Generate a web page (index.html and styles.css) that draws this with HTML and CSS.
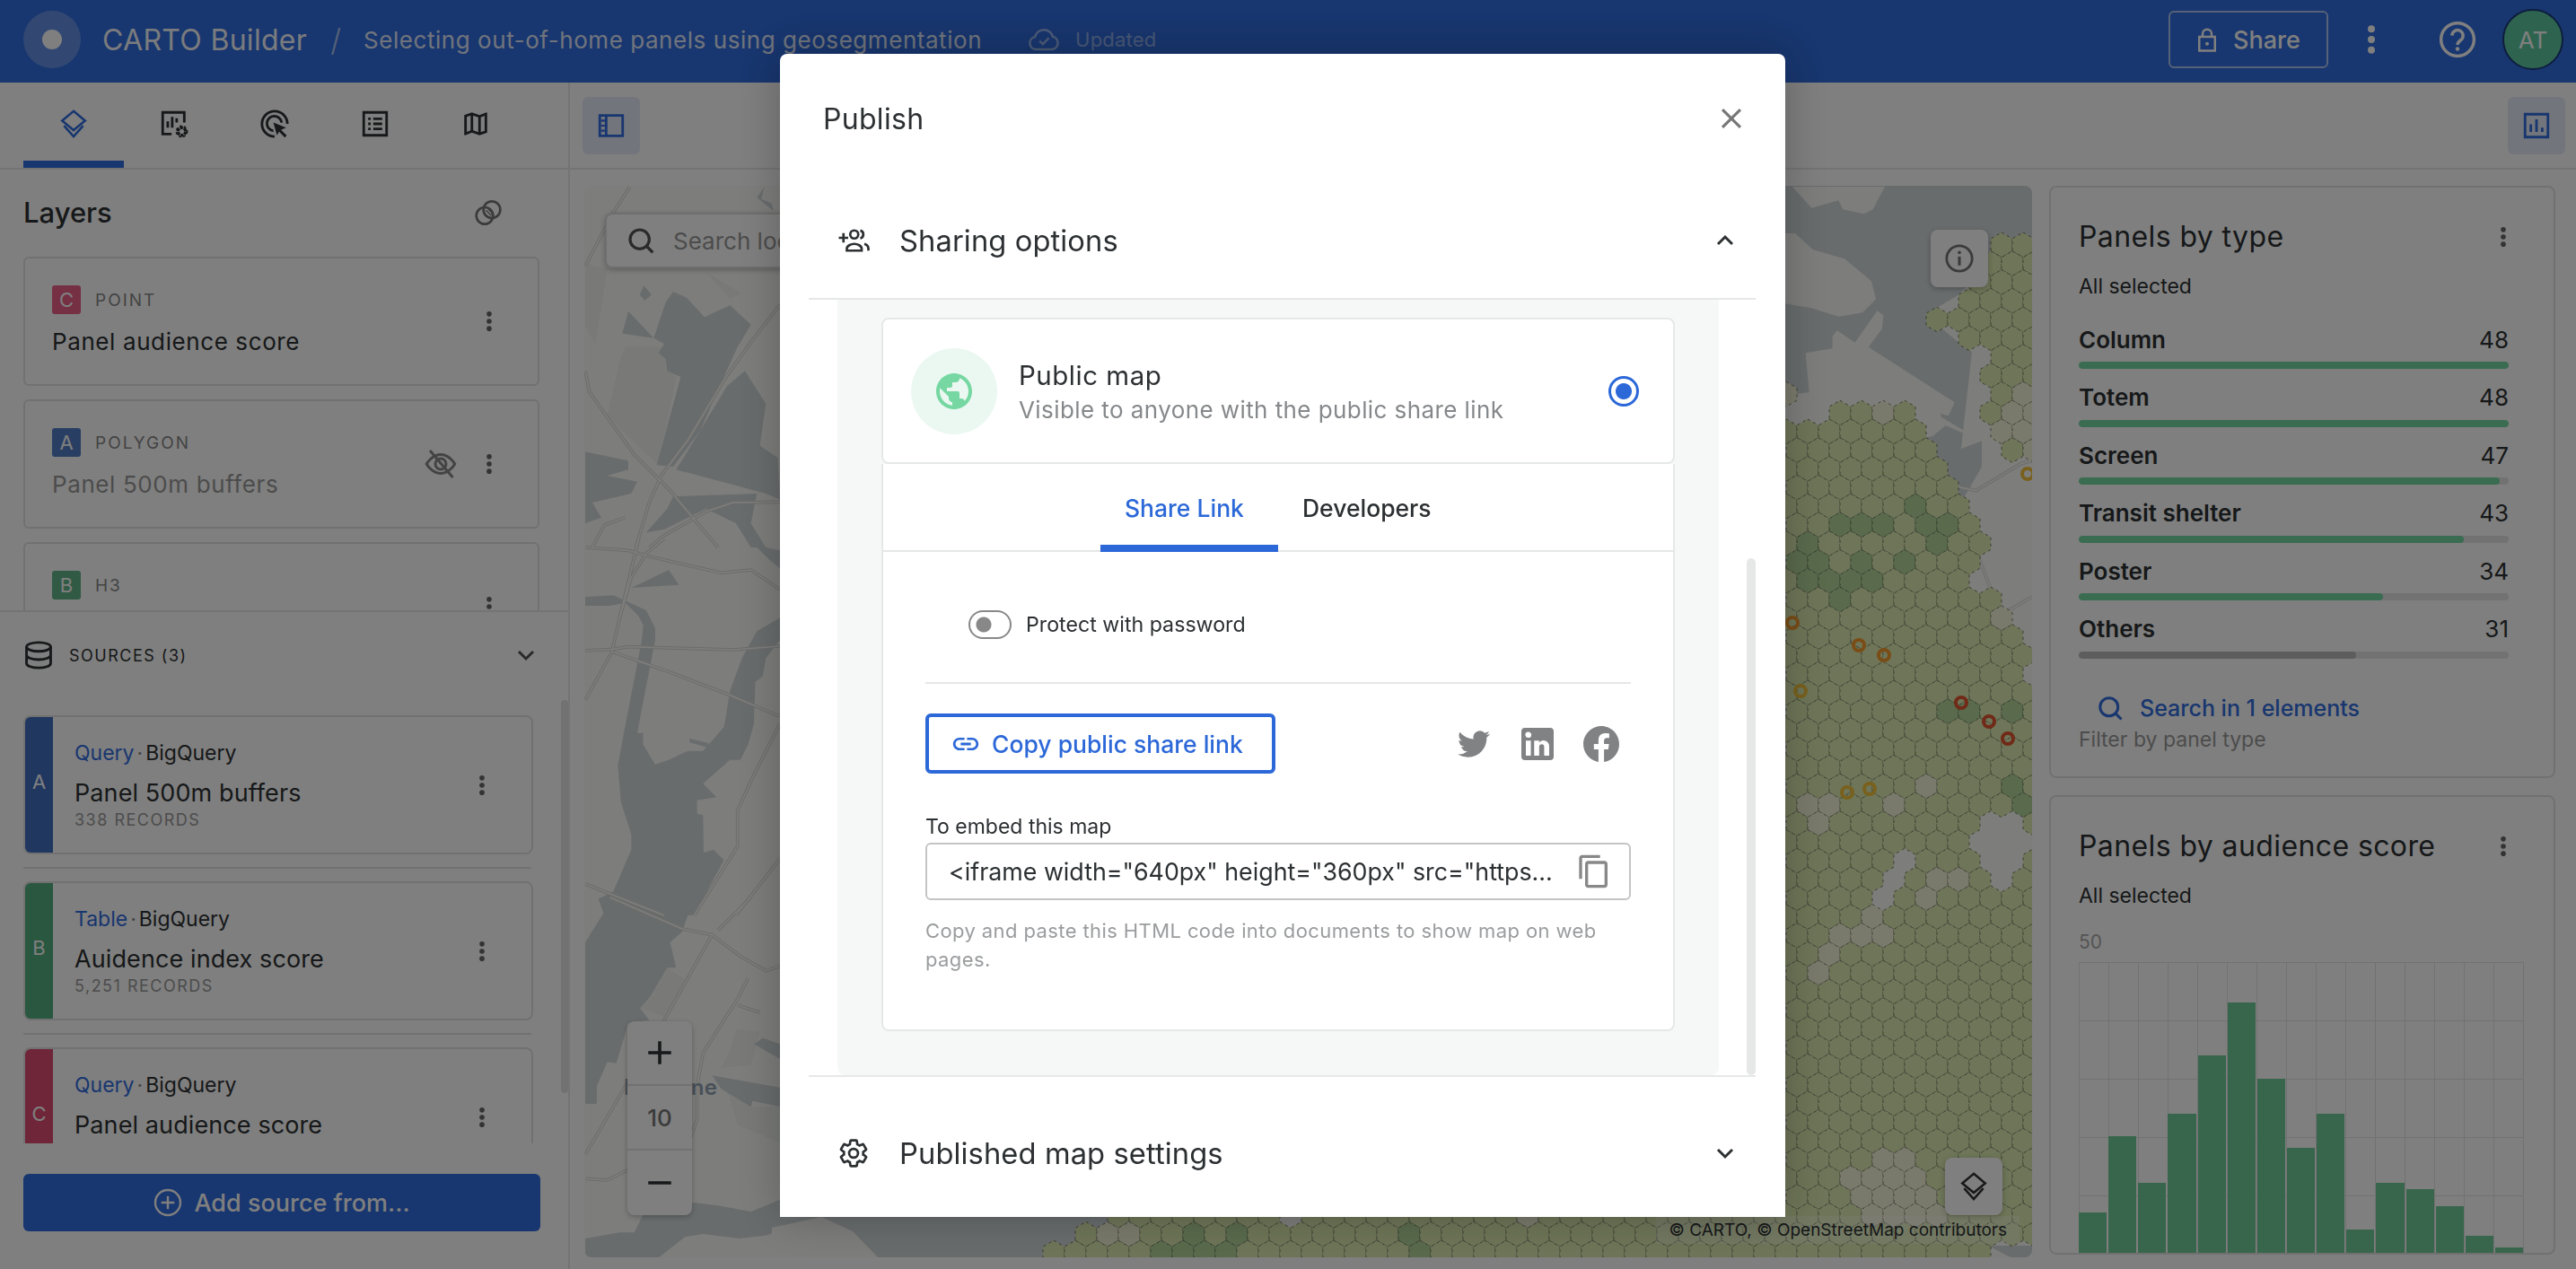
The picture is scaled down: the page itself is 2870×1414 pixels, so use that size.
FILE: index.html
```html
<!DOCTYPE html>
<html lang="en">
<head>
    <meta charset="UTF-8">
    <title>CARTO Builder - Publish</title>
    <link rel="stylesheet" href="styles.css">
</head>
<body>

    <!-- Shared icons -->
    <svg class="sprite" width="0" height="0">
        <symbol id="i-dots" viewBox="0 0 24 24"><circle cx="12" cy="5" r="2.4"/><circle cx="12" cy="12" r="2.4"/><circle cx="12" cy="19" r="2.4"/></symbol>
        <symbol id="i-layers" viewBox="0 0 24 24"><path d="M12 2 21 9.500 12 17 3 9.500Z M4.500 13.500 12 22 19.500 13.500" fill="none" stroke="currentColor" stroke-width="1.800"/></symbol>
        <symbol id="i-search" viewBox="0 0 24 24"><circle cx="11" cy="11" r="8" fill="none" stroke="currentColor" stroke-width="2.400"/><path d="m16.500 16.500 5.500 5.500" stroke="currentColor" stroke-width="2.400"/></symbol>
        <symbol id="i-chevron" viewBox="0 0 24 24"><path d="M6 9l6 6 6-6" fill="none" stroke="currentColor" stroke-width="2.200"/></symbol>
    </svg>

    <div class="app">
        <!-- Top bar -->
        <header class="topbar">
            <div class="logo"><span></span></div>
            <div class="product">CARTO Builder</div>
            <div class="slash">/</div>
            <div class="map-title">Selecting out-of-home panels using geosegmentation</div>
            <svg class="cloud" viewBox="0 0 24 24"><path d="M6.500 19a4.500 4.500 0 0 1-.8-8.900A6.500 6.500 0 0 1 18.300 10 4.600 4.600 0 0 1 18 19Z M9 13l2.300 2.300L15.500 11" fill="none" stroke="currentColor" stroke-width="1.600"/></svg>
            <div class="saved">Updated</div>
            <div class="topbar-right">
                <button class="share-btn">
                    <svg viewBox="0 0 24 24"><path d="M5 9.500h14V22H5Z M8 9.500V7a4 4 0 0 1 8 0v2.500" fill="none" stroke="currentColor" stroke-width="2"/><circle cx="12" cy="15.700" r="1.600" fill="currentColor"/></svg>
                    Share
                </button>
                <svg class="top-dots"><use href="#i-dots"/></svg>
                <svg class="help" viewBox="0 0 24 24"><circle cx="12" cy="12" r="10.500" fill="none" stroke="currentColor" stroke-width="2"/><path d="M8.500 9.500a3.500 3.500 0 1 1 5.500 2.900c-1.300.9-2 1.500-2 3" fill="none" stroke="currentColor" stroke-width="2"/><circle cx="12" cy="18" r="1.300" fill="currentColor"/></svg>
                <div class="avatar">AT</div>
            </div>
        </header>

        <div class="workspace">
            <!-- Left panel -->
            <aside class="left">
                <div class="tabs">
                    <div class="tab active"><svg><use href="#i-layers"/></svg></div>
                    <div class="tab">
                        <svg viewBox="0 0 24 24"><path d="M10 20H3V3h17v8" fill="none" stroke="currentColor" stroke-width="2"/><path d="M7 15V10M10.500 15V6.500M14 11V7.500" stroke="currentColor" stroke-width="2"/><circle cx="18" cy="18" r="3" fill="none" stroke="currentColor" stroke-width="2.400" stroke-dasharray="2.500 .6"/><circle cx="18" cy="18" r="4.300" fill="none" stroke="currentColor" stroke-width="1.200" stroke-dasharray="1.800 1.800"/></svg>
                    </div>
                    <div class="tab">
                        <svg viewBox="0 0 24 24"><path d="M12 22A10 10 0 1 1 22 12" fill="none" stroke="currentColor" stroke-width="2"/><path d="M11 17.500A5.800 5.800 0 1 1 17.500 11" fill="none" stroke="currentColor" stroke-width="2"/><path d="M11 11l10 4-4 1.700 4.500 4.500-1.500 1.500-4.500-4.500L13.800 21Z" fill="currentColor"/></svg>
                    </div>
                    <div class="tab">
                        <svg viewBox="0 0 24 24"><path d="M3 3h18v18H3Z" fill="none" stroke="currentColor" stroke-width="2"/><path d="M6.500 8h2M6.500 12h2M6.500 16h2M10.500 8h7M10.500 12h7M10.500 16h7" stroke="currentColor" stroke-width="2"/></svg>
                    </div>
                    <div class="tab">
                        <svg viewBox="0 0 24 24"><path fill="currentColor" d="M20.500 3l-.16.03L15 5.100 9 3 3.360 4.900c-.21.07-.36.25-.36.48V20.500c0 .28.22.5.5.5l.16-.03L9 18.900l6 2.100 5.640-1.900c.21-.07.36-.25.36-.48V3.500c0-.28-.22-.5-.5-.5zM10 5.470l4 1.400v11.660l-4-1.400V5.470zm-5 .99l3-1.010v11.700l-3 1.160V6.460zm14 11.080l-3 1.010V6.860l3-1.160v11.840z"/></svg>
                    </div>
                </div>

                <!-- Layers -->
                <section class="layers">
                    <div class="layers-head">
                        <h2>Layers</h2>
                        <svg viewBox="0 0 24 24"><circle cx="9" cy="14.500" r="7" fill="none" stroke="currentColor" stroke-width="2"/><circle cx="15" cy="9.500" r="7" fill="none" stroke="currentColor" stroke-width="2"/><path d="M10 10l4.500 4.500M12 9l3 3" stroke="currentColor" stroke-width="1"/></svg>
                    </div>
                    <div class="layer-card">
                        <div class="layer-text">
                            <div class="layer-type"><span class="chip chip-c">C</span>POINT</div>
                            <div class="layer-name">Panel audience score</div>
                        </div>
                        <svg class="dots"><use href="#i-dots"/></svg>
                    </div>
                    <div class="layer-card hidden-layer">
                        <div class="layer-text">
                            <div class="layer-type"><span class="chip chip-a">A</span>POLYGON</div>
                            <div class="layer-name">Panel 500m buffers</div>
                        </div>
                        <svg class="eye" viewBox="0 0 24 24"><path d="M1.500 12S5.500 5 12 5s10.500 7 10.500 7-4 7-10.500 7S1.500 12 1.500 12Z" fill="none" stroke="currentColor" stroke-width="2"/><circle cx="12" cy="12" r="4" fill="none" stroke="currentColor" stroke-width="2"/><path d="M4 2l17 20" stroke="currentColor" stroke-width="2"/></svg>
                        <svg class="dots"><use href="#i-dots"/></svg>
                    </div>
                    <div class="layer-card">
                        <div class="layer-text">
                            <div class="layer-type"><span class="chip chip-b">B</span>H3</div>
                            <div class="layer-name">&nbsp;</div>
                        </div>
                        <svg class="dots"><use href="#i-dots"/></svg>
                    </div>
                </section>

                <!-- Sources -->
                <section class="sources">
                    <div class="sources-head">
                        <svg viewBox="0 0 24 24"><ellipse cx="12" cy="5.500" rx="9.500" ry="3.500" fill="none" stroke="currentColor" stroke-width="2"/><path d="M2.500 5.500v13c0 2 4.300 3.500 9.500 3.500s9.500-1.500 9.500-3.500v-13M2.500 12c0 2 4.300 3.500 9.500 3.500s9.500-1.500 9.500-3.500" fill="none" stroke="currentColor" stroke-width="2"/></svg>
                        <span>SOURCES (3)</span>
                        <svg class="sources-chevron"><use href="#i-chevron"/></svg>
                    </div>
                    <div class="source-list">
                        <div class="source-card">
                            <div class="source-strip strip-a">A</div>
                            <div class="source-text">
                                <div class="source-kind"><span>Query</span><i>&middot;</i>BigQuery</div>
                                <div class="source-name">Panel 500m buffers</div>
                                <div class="source-count">338 RECORDS</div>
                            </div>
                            <svg class="dots"><use href="#i-dots"/></svg>
                        </div>
                        <div class="source-sep"></div>
                        <div class="source-card">
                            <div class="source-strip strip-b">B</div>
                            <div class="source-text">
                                <div class="source-kind"><span>Table</span><i>&middot;</i>BigQuery</div>
                                <div class="source-name">Auidence index score</div>
                                <div class="source-count">5,251 RECORDS</div>
                            </div>
                            <svg class="dots"><use href="#i-dots"/></svg>
                        </div>
                        <div class="source-sep"></div>
                        <div class="source-card">
                            <div class="source-strip strip-c">C</div>
                            <div class="source-text">
                                <div class="source-kind"><span>Query</span><i>&middot;</i>BigQuery</div>
                                <div class="source-name">Panel audience score</div>
                                <div class="source-count">&nbsp;</div>
                            </div>
                            <svg class="dots"><use href="#i-dots"/></svg>
                        </div>
                    </div>
                    <button class="add-source">
                        <svg viewBox="0 0 24 24"><circle cx="12" cy="12" r="10.500" fill="none" stroke="currentColor" stroke-width="1.800"/><path d="M12 6.500v11M6.500 12h11" stroke="currentColor" stroke-width="1.800"/></svg>
                        Add source from...
                    </button>
                    <div class="side-scroll"></div>
                </section>
            </aside>

            <!-- Map and widgets -->
            <div class="center">
                <div class="toolbar">
                    <div class="tool-btn">
                        <svg viewBox="0 0 24 24"><path d="M3 4h18v16H3Z M8 4v16" fill="none" stroke="currentColor" stroke-width="2"/><path d="M4 8h3M4 12h3M4 16h3" stroke="currentColor" stroke-width="1.500"/></svg>
                    </div>
                    <div class="caret"></div>
                    <div class="tool-sep"></div>
                    <div class="tool-btn tool-right">
                        <svg viewBox="0 0 24 24"><path d="M3 3h18v18H3Z" fill="none" stroke="currentColor" stroke-width="2"/><path d="M7.500 17v-6M12 17V7M16.500 17v-3.500" stroke="currentColor" stroke-width="2"/></svg>
                    </div>
                </div>

                <div class="content">
                    <div class="map">
                        <svg class="map-art" viewBox="651 207 1613 1194" preserveAspectRatio="none">
                            <defs>
                                <g id="roads-left" fill="none">
                                    <g transform="translate(640 190) scale(.3333)">
                                        <path d="M185 55 130 140 36 320"/>
                                        <path d="M687 450 600 560 500 700 380 900 290 1020 250 1110 205 1260"/>
                                        <path d="M36 670 50 740 85 790 200 950 320 1070 420 1190 480 1260"/>
                                        <path d="M687 1108 530 1110 440 1140 300 1220 250 1260"/>
                                        <path d="M170 1160 100 1185 60 1260"/>
                                    </g>
                                    <g transform="translate(640 600) scale(.3333)">
                                        <path d="M36 30 180 40 250 60 490 115 590 105 687 170"/>
                                        <path d="M300 0 240 50 190 130 150 270 125 380 36 540"/>
                                        <path d="M215 0 150 270"/>
                                        <path d="M36 375 130 370 180 362 530 372 687 360"/>
                                        <path d="M130 380 300 440 510 520 687 595"/>
                                        <path d="M687 620 600 790 545 910 545 1030 400 1260"/>
                                        <path d="M687 1070 540 1260"/>
                                        <path d="M36 1155 300 1260"/>
                                    </g>
                                    <g transform="translate(640 1000) scale(.3333)">
                                        <path d="M120 0 360 105 460 125 560 200 640 245 687 230"/>
                                        <path d="M460 125 300 410 36 860"/>
                                        <path d="M590 0 480 110"/>
                                        <path d="M580 270 545 340 430 520 410 630 410 740 390 800"/>
                                        <path d="M545 360 620 385"/>
                                        <path d="M36 940 110 945 180 910"/>
                                    </g>
                                    <g transform="translate(1985 200) scale(.3333)">
                                        <path d="M535 1000 600 1030 650 1040 800 950 837 940"/>
                                        <path d="M650 1240 710 1400 750 1450"/>
                                        <path d="M760 1440 837 1395"/>
                                    </g>
                                </g>
                            </defs>

                            <rect class="land" x="651" y="207" width="1613" height="1194"/>

                            <!-- West side water and parks -->
                            <g transform="translate(640 190) scale(.3333)">
                                <g class="park">
                                    <polygon points="36,310 110,330 70,580 36,520"/>
                                    <polygon points="170,590 300,590 340,690 280,985 110,820 150,640"/>
                                    <polygon points="440,340 560,410 520,430"/>
                                </g>
                                <g class="water">
                                    <polygon points="330,405 375,425 435,490 520,450 590,515 545,590 495,700 420,870 330,990 275,985 355,690 310,670 305,630 280,610 300,580 265,560 305,440"/>
                                    <polygon points="510,720 570,670 640,780 620,920 680,960 687,1100 640,1080 340,1000 420,870"/>
                                    <polygon points="36,940 180,970 180,1000 110,1020 210,1040 190,1080 60,1110 90,1160 36,1180"/>
                                    <polygon points="180,470 265,560 160,545"/>
                                    <polygon points="232,385 258,415 235,435 218,415"/>
                                    <polygon points="330,1090 610,1080 590,1180 640,1260 590,1260 540,1180 440,1130 300,1200 240,1210 310,1130"/>
                                    <polygon points="635,55 610,90 665,135 660,110 625,95"/>
                                </g>
                            </g>
                            <g transform="translate(640 600) scale(.3333)">
                                <g class="water">
                                    <polygon points="36,195 130,190 240,240 270,300 270,340 210,650 230,650 230,690 270,755 315,740 380,710 430,710 500,630 520,510 560,400 610,310 687,265 687,340 640,400 630,460 605,480 600,620 580,690 555,740 520,740 430,820 475,865 410,875 410,920 430,925 432,1050 465,1040 500,1075 400,1260 100,1260 80,1205 130,1180 190,1040 190,990 155,880 145,760 165,650 225,340 230,290 215,260 170,215 120,225 36,225"/>
                                    <polygon points="600,0 640,30 687,40 687,100 650,70 610,30"/>
                                    <polygon points="190,165 315,105 350,155"/>
                                    <polygon points="385,668 450,685 445,698 385,682"/>
                                </g>
                            </g>
                            <g transform="translate(640 1000) scale(.3333)">
                                <g class="park">
                                    <polygon points="310,235 380,280 300,400 220,370 260,330"/>
                                    <polygon points="540,440 620,450 590,560 490,570 520,510"/>
                                    <polygon points="510,640 590,700 687,700 687,820 545,760"/>
                                </g>
                                <g class="water">
                                    <polygon points="85,0 400,0 360,115 320,150 340,235 310,235 255,330 220,370 250,410 180,420 140,555 110,550 75,630 75,690 36,690 36,150 105,40"/>
                                    <polygon points="600,490 630,470 687,490 687,540"/>
                                    <polygon points="460,595 687,635 687,700 595,680 590,700 490,640"/>
                                    <polygon points="400,1020 480,1030 590,1050 687,1010 760,1070 760,1090 640,1130 550,1140 430,1125 370,1135 280,1205 36,1205 36,1140 150,1120 200,1120 230,1060"/>
                                </g>
                            </g>

                            <!-- East side water -->
                            <g class="water">
                                <rect x="870" y="1356" width="370" height="45"/>
                                <polygon points="1985,207 2264,207 2264,300 2212,300 2180,330 2145,350 2180,380 2208,400 2208,520 2185,560 2130,500 2105,480 2030,440 1985,440"/>
                            </g>
                            <g class="land">
                                <polygon points="860,1368 915,1356 950,1372 978,1401 860,1401"/>
                            </g>
                            <g transform="translate(1985 200) scale(.3333)" class="land">
                                <polygon points="36,24 100,95 190,70 205,100 275,115 305,100 345,24"/>
                                <polygon points="12,180 45,180 105,235 210,265 300,340 315,400 270,445 190,458 100,430 12,415"/>
                                <polygon points="170,525 185,505 245,545 320,438 340,455 335,500 290,560 578,745 558,790 530,782 535,795 610,840 640,905 612,850 548,822 505,858 462,868 425,850 380,800 100,800 80,580 170,565"/>
                                <polygon points="30,720 100,710 110,800 60,810"/>
                                <polygon points="668,545 700,560 700,620 690,680 690,830 710,840 680,870 600,900 640,540"/>
                            </g>
                            <g class="water">
                                <polygon points="2240,1401 2264,1401 2264,1388 2215,1388"/>
                            </g>

                            <use href="#roads-left" class="road-edge"/>
                            <use href="#roads-left" class="road-core"/>

                            <!-- H3 cells, filled in by map.js -->
                            <g id="hexes"></g>

                            <!-- Panels -->
                            <g class="pin pin-yellow">
                                <circle cx="2259" cy="528" r="6"/><circle cx="2006" cy="770" r="6"/>
                                <circle cx="2058" cy="883" r="6"/><circle cx="2083" cy="879" r="6"/>
                            </g>
                            <g class="pin pin-orange">
                                <circle cx="1997" cy="694" r="6"/><circle cx="2071" cy="719" r="6"/><circle cx="2099" cy="730" r="6"/>
                            </g>
                            <g class="pin pin-red">
                                <circle cx="2185" cy="783" r="6"/><circle cx="2216" cy="804" r="6"/><circle cx="2237" cy="823" r="6"/>
                            </g>
                        </svg>

                        <div class="map-label">Bayonne</div>

                        <div class="map-search">
                            <svg><use href="#i-search"/></svg>
                            <span>Search location</span>
                        </div>

                        <div class="map-btn map-info">
                            <svg viewBox="0 0 24 24"><circle cx="12" cy="12" r="10" fill="none" stroke="currentColor" stroke-width="2"/><path d="M12 10.500v7" stroke="currentColor" stroke-width="2.200"/><circle cx="12" cy="7.300" r="1.300" fill="currentColor"/></svg>
                        </div>

                        <div class="map-zoom">
                            <div class="zoom-cell">
                                <svg viewBox="0 0 24 24"><path d="M12 3v18M3 12h18" stroke="currentColor" stroke-width="2.500"/></svg>
                            </div>
                            <div class="zoom-cell zoom-level">10</div>
                            <div class="zoom-cell">
                                <svg viewBox="0 0 24 24"><path d="M3 12h18" stroke="currentColor" stroke-width="2.500"/></svg>
                            </div>
                        </div>

                        <div class="map-btn map-layers"><svg><use href="#i-layers"/></svg></div>

                        <div class="attribution">&copy; CARTO, &copy; OpenStreetMap contributors</div>
                    </div>

                    <!-- Widgets -->
                    <div class="widgets">
                        <div class="widget">
                            <div class="widget-head">
                                <h3>Panels by type</h3>
                                <svg class="dots"><use href="#i-dots"/></svg>
                            </div>
                            <div class="widget-sub">All selected</div>
                            <div class="cat-list">
                                <div class="cat"><div class="cat-row"><b>Column</b><span>48</span></div><div class="cat-track"><div class="cat-bar" style="width:100%"></div></div></div>
                                <div class="cat"><div class="cat-row"><b>Totem</b><span>48</span></div><div class="cat-track"><div class="cat-bar" style="width:100%"></div></div></div>
                                <div class="cat"><div class="cat-row"><b>Screen</b><span>47</span></div><div class="cat-track"><div class="cat-bar" style="width:97.900%"></div></div></div>
                                <div class="cat"><div class="cat-row"><b>Transit shelter</b><span>43</span></div><div class="cat-track"><div class="cat-bar" style="width:89.600%"></div></div></div>
                                <div class="cat"><div class="cat-row"><b>Poster</b><span>34</span></div><div class="cat-track"><div class="cat-bar" style="width:70.700%"></div></div></div>
                                <div class="cat"><div class="cat-row"><b>Others</b><span>31</span></div><div class="cat-track"><div class="cat-bar others" style="width:64.500%"></div></div></div>
                            </div>
                            <div class="widget-search">
                                <svg><use href="#i-search"/></svg>
                                Search in 1 elements
                            </div>
                            <div class="widget-note">Filter by panel type</div>
                        </div>

                        <div class="widget">
                            <div class="widget-head">
                                <h3>Panels by audience score</h3>
                                <svg class="dots"><use href="#i-dots"/></svg>
                            </div>
                            <div class="widget-sub">All selected</div>
                            <div class="axis-top">50</div>
                            <div class="histogram">
                                <div class="bin" style="height:45px"></div>
                                <div class="bin" style="height:130px"></div>
                                <div class="bin" style="height:78px"></div>
                                <div class="bin" style="height:155px"></div>
                                <div class="bin" style="height:220px"></div>
                                <div class="bin" style="height:279px"></div>
                                <div class="bin" style="height:194px"></div>
                                <div class="bin" style="height:117px"></div>
                                <div class="bin" style="height:155px"></div>
                                <div class="bin" style="height:26px"></div>
                                <div class="bin" style="height:78px"></div>
                                <div class="bin" style="height:71px"></div>
                                <div class="bin" style="height:52px"></div>
                                <div class="bin" style="height:19px"></div>
                                <div class="bin" style="height:6px"></div>
                            </div>
                        </div>
                    </div>
                </div>
            </div>
        </div>
    </div>

    <!-- Publish dialog -->
    <div class="backdrop"></div>
    <div class="modal">
        <div class="modal-head">
            <h1>Publish</h1>
            <svg viewBox="0 0 24 24"><path fill="currentColor" d="M19 6.410 17.590 5 12 10.590 6.410 5 5 6.410 10.590 12 5 17.590 6.410 19 12 13.410 17.590 19 19 17.590 13.410 12z"/></svg>
        </div>

        <div class="acc-head acc-open">
            <svg viewBox="0 0 24 24"><path d="M1 10h7M4.500 6.500v7" stroke="currentColor" stroke-width="1.800"/><circle cx="12.500" cy="7.500" r="3" fill="none" stroke="currentColor" stroke-width="1.800"/><path d="M7 19.500v-1.500c0-2 3-3.500 5.500-3.500s5.500 1.500 5.500 3.500v1.500Z" fill="none" stroke="currentColor" stroke-width="1.800"/><path d="M17 4.600a3 3 0 0 1 0 5.800M20 14.500c1.800.6 3 1.800 3 3.500v1.500" fill="none" stroke="currentColor" stroke-width="1.800"/></svg>
            <span>Sharing options</span>
            <svg class="acc-chevron flip"><use href="#i-chevron"/></svg>
        </div>

        <div class="acc-body">
            <div class="acc-panel">
                <div class="option-card">
                    <div class="option-icon">
                        <svg viewBox="0 0 24 24"><path fill="currentColor" d="M12 2C6.480 2 2 6.480 2 12s4.480 10 10 10 10-4.480 10-10S17.520 2 12 2zm-1 17.930c-3.950-.49-7-3.850-7-7.930 0-.62.08-1.210.21-1.790L9 15v1c0 1.100.9 2 2 2v1.930zm6.900-2.540c-.26-.81-1-1.390-1.900-1.390h-1v-3c0-.55-.45-1-1-1H8v-2h2c.55 0 1-.45 1-1V7h2c1.100 0 2-.9 2-2v-.41c2.930 1.190 5 4.060 5 7.410 0 2.080-.8 3.970-2.100 5.390z"/></svg>
                    </div>
                    <div class="option-text">
                        <div class="option-title">Public map</div>
                        <div class="option-sub">Visible to anyone with the public share link</div>
                    </div>
                    <div class="radio"></div>
                </div>

                <div class="share-card">
                    <div class="share-tabs">
                        <div class="share-tab active">Share Link</div>
                        <div class="share-tab">Developers</div>
                    </div>
                    <div class="share-body">
                        <div class="protect">
                            <div class="switch"></div>
                            <span>Protect with password</span>
                        </div>
                        <div class="share-line"></div>
                        <div class="share-row">
                            <button class="copy-btn">
                                <svg viewBox="0 0 24 24"><path fill="currentColor" d="M3.900 12c0-1.710 1.390-3.100 3.100-3.100h4V7H7c-2.760 0-5 2.240-5 5s2.240 5 5 5h4v-1.900H7c-1.710 0-3.100-1.390-3.100-3.100zM8 13h8v-2H8v2zm9-6h-4v1.900h4c1.710 0 3.100 1.390 3.100 3.100s-1.390 3.100-3.100 3.100h-4V17h4c2.760 0 5-2.240 5-5s-2.240-5-5-5z"/></svg>
                                Copy public share link
                            </button>
                            <div class="social">
                                <svg viewBox="-4 -4 32 32"><path fill="currentColor" d="M23.950 4.570a10 10 0 0 1-2.820.77 4.960 4.960 0 0 0 2.160-2.720c-.95.55-2 .96-3.120 1.180a4.920 4.920 0 0 0-8.380 4.480C7.690 8.100 4.070 6.130 1.640 3.160a4.820 4.820 0 0 0-.67 2.480c0 1.710.87 3.210 2.190 4.100a4.900 4.900 0 0 1-2.230-.62v.06a4.920 4.920 0 0 0 3.950 4.830 5 5 0 0 1-2.210.08 4.940 4.940 0 0 0 4.600 3.420A9.870 9.870 0 0 1 0 19.540a13.940 13.940 0 0 0 7.550 2.210c9.050 0 14-7.500 14-13.980 0-.21 0-.42-.02-.63a9.940 9.940 0 0 0 2.420-2.550z"/></svg>
                                <svg viewBox="0 0 24 24"><path fill="currentColor" d="M19 3a2 2 0 0 1 2 2v14a2 2 0 0 1-2 2H5a2 2 0 0 1-2-2V5a2 2 0 0 1 2-2h14m-.5 15.500v-5.300a3.260 3.260 0 0 0-3.260-3.260c-.85 0-1.840.52-2.320 1.300v-1.110h-2.790v8.370h2.790v-4.930c0-.77.62-1.400 1.390-1.400a1.400 1.400 0 0 1 1.400 1.400v4.930h2.790M6.880 8.560a1.680 1.680 0 0 0 1.680-1.680c0-.93-.75-1.690-1.680-1.690a1.690 1.690 0 0 0-1.690 1.690c0 .93.76 1.680 1.690 1.680m1.390 9.940v-8.370H5.500v8.370h2.770z"/></svg>
                                <svg viewBox="0 0 24 24"><path fill="currentColor" d="M12 2.040c-5.500 0-10 4.490-10 10.020 0 5 3.660 9.150 8.440 9.900v-7H7.900v-2.900h2.540V9.850c0-2.510 1.490-3.890 3.780-3.890 1.090 0 2.230.19 2.230.19v2.470h-1.260c-1.240 0-1.630.77-1.630 1.560v1.880h2.780l-.45 2.900h-2.330v7a10 10 0 0 0 8.440-9.900c0-5.530-4.500-10.020-10-10.020z"/></svg>
                            </div>
                        </div>
                        <div class="embed-label">To embed this map</div>
                        <div class="embed-field">
                            <span>&lt;iframe width="640px" height="360px" src="https...</span>
                            <svg viewBox="0 0 24 24"><path fill="currentColor" d="M16 1H4c-1.100 0-2 .9-2 2v14h2V3h12V1zm3 4H8c-1.100 0-2 .9-2 2v14c0 1.100.9 2 2 2h11c1.100 0 2-.9 2-2V7c0-1.100-.9-2-2-2zm0 16H8V7h11v14z"/></svg>
                        </div>
                        <p class="embed-help">Copy and paste this HTML code into documents to show map on web pages.</p>
                    </div>
                </div>
            </div>
            <div class="acc-scroll"></div>
        </div>

        <div class="acc-head acc-closed">
            <svg viewBox="0 0 24 24"><path fill="none" stroke="currentColor" stroke-width="1.800" d="M19.140 12.940c.04-.3.06-.61.06-.94 0-.32-.02-.64-.07-.94l2.030-1.580c.18-.14.23-.41.12-.61l-1.920-3.320c-.12-.22-.37-.29-.59-.22l-2.390.96c-.5-.38-1.030-.7-1.620-.94l-.36-2.540c-.04-.24-.24-.41-.48-.41h-3.840c-.24 0-.43.17-.47.41l-.36 2.540c-.59.24-1.130.57-1.620.94l-2.390-.96c-.22-.08-.47 0-.59.22L2.740 8.870c-.12.21-.08.47.12.61l2.030 1.580c-.05.3-.07.62-.07.94s.02.64.07.94l-2.030 1.580c-.18.14-.23.41-.12.61l1.920 3.320c.12.22.37.29.59.22l2.390-.96c.5.38 1.030.7 1.620.94l.36 2.540c.05.24.24.41.48.41h3.840c.24 0 .44-.17.47-.41l.36-2.540c.59-.24 1.130-.56 1.620-.94l2.390.96c.22.08.47 0 .59-.22l1.920-3.320c.12-.22.07-.47-.12-.61l-2.010-1.580z"/><circle cx="12" cy="12" r="3.300" fill="none" stroke="currentColor" stroke-width="1.800"/></svg>
            <span>Published map settings</span>
            <svg class="acc-chevron"><use href="#i-chevron"/></svg>
        </div>
    </div>

    <script src="map.js"></script>
</body>
</html>
```

FILE: styles.css
```css
/* Global Styles */
* {
    margin: 0;
    padding: 0;
    box-sizing: border-box;
}

body {
    width: 2870px;
    height: 1414px;
    overflow: hidden;
    font-family: Inter, "Noto Sans", sans-serif;
    color: #2c3032;
    background-color: #fff;
}

button {
    font-family: inherit;
    background: none;
    border: none;
}

.sprite {
    position: absolute;
}

.app {
    height: 1414px;
    display: flex;
    flex-direction: column;
}

/* Top bar */
.topbar {
    height: 92px;
    flex: none;
    display: flex;
    align-items: center;
    padding: 0 14px 4px 26px;
    background-color: #306cde;
    color: #fff;
}

.logo {
    width: 64px;
    height: 64px;
    border-radius: 50%;
    background-color: rgba(255, 255, 255, 0.25);
    display: flex;
    align-items: center;
    justify-content: center;
}

.logo span {
    width: 22px;
    height: 22px;
    border-radius: 50%;
    background-color: #fff;
}

.product {
    margin-left: 24px;
    font-size: 32px;
    letter-spacing: 0.3px;
    opacity: 0.95;
}

.slash {
    margin-left: 26px;
    font-size: 34px;
    font-weight: 300;
    opacity: 0.6;
}

.map-title {
    margin-left: 25px;
    font-size: 26px;
    letter-spacing: 0.55px;
    opacity: 0.85;
}

.cloud {
    width: 38px;
    height: 38px;
    margin-left: 50px;
    opacity: 0.5;
}

.saved {
    margin-left: 16px;
    font-size: 22px;
    letter-spacing: 0.2px;
    opacity: 0.45;
}

.topbar-right {
    margin-left: auto;
    display: flex;
    align-items: center;
}

.share-btn {
    width: 178px;
    height: 64px;
    display: flex;
    align-items: center;
    gap: 14px;
    padding-left: 26px;
    border: 2px solid rgba(255, 255, 255, 0.6);
    border-radius: 6px;
    color: #fff;
    font-size: 27px;
    font-weight: 500;
}

.share-btn svg {
    width: 30px;
    height: 30px;
}

.top-dots {
    width: 40px;
    height: 40px;
    margin-left: 28px;
    fill: #fff;
}

.help {
    width: 42px;
    height: 42px;
    margin-left: 55px;
}

.avatar {
    width: 68px;
    height: 68px;
    margin-left: 29px;
    border-radius: 50%;
    border: 2px solid #1a3b7a;
    background-color: #5cc99f;
    display: flex;
    align-items: center;
    justify-content: center;
    font-size: 26px;
    color: #fff;
}

/* Workspace */
.workspace {
    flex: 1;
    display: flex;
    min-height: 0;
}

/* Left panel */
.left {
    width: 635px;
    flex: none;
    display: flex;
    flex-direction: column;
    border-right: 2px solid #e8e8e8;
}

.tabs {
    height: 97px;
    flex: none;
    display: flex;
    padding-left: 26px;
    border-bottom: 2px solid #e8e8e8;
}

.tab {
    width: 112px;
    height: 95px;
    display: flex;
    align-items: center;
    justify-content: center;
    padding-bottom: 4px;
    color: #2c3032;
}

.tab svg {
    width: 34px;
    height: 34px;
}

.tab.active {
    color: #306cde;
    box-shadow: inset 0 -8px 0 #306cde;
}

.layers {
    height: 493px;
    flex: none;
    padding: 0 32px 0 26px;
    overflow: hidden;
    border-bottom: 2px solid #e8e8e8;
}

.layers-head {
    height: 97px;
    display: flex;
    align-items: center;
    justify-content: space-between;
    padding-right: 41px;
    padding-bottom: 2px;
}

.layers-head h2 {
    font-size: 31px;
    font-weight: 500;
}

.layers-head svg {
    width: 32px;
    height: 32px;
    color: #777;
}

.layer-card {
    height: 144px;
    margin-bottom: 15px;
    display: flex;
    align-items: center;
    padding: 0 40px 0 30px;
    border: 2px solid #e2e2e2;
    border-radius: 6px;
}

.layer-text {
    flex: 1;
    padding-bottom: 2px;
}

.layer-type {
    display: flex;
    align-items: center;
    gap: 16px;
    font-size: 19px;
    letter-spacing: 2px;
    color: #888;
}

.chip {
    width: 32px;
    height: 32px;
    border-radius: 3px;
    display: flex;
    align-items: center;
    justify-content: center;
    font-size: 22px;
    letter-spacing: 0;
    color: #fff;
    opacity: 0.9;
}

.chip-a { background-color: #406ec0; }
.chip-b { background-color: #52ae7e; }
.chip-c { background-color: #e8507c; }

.layer-name {
    margin-top: 15px;
    font-size: 26px;
    font-weight: 400;
    letter-spacing: 0.6px;
}

.hidden-layer .layer-name {
    color: #999;
}

.eye {
    width: 36px;
    height: 36px;
    margin-right: 22px;
    color: #888;
}

.dots {
    width: 28px;
    height: 28px;
    fill: #666;
    flex: none;
}

/* Sources */
.sources {
    flex: 1;
    position: relative;
    padding: 0 31px 0 26px;
    min-height: 0;
    display: flex;
    flex-direction: column;
}

.sources-head {
    height: 96px;
    flex: none;
    display: flex;
    align-items: center;
    gap: 17px;
    margin-bottom: 19px;
    font-size: 18px;
    letter-spacing: 1.500px;
    font-weight: 400;
}

.sources-head > svg:first-child {
    width: 34px;
    height: 34px;
}

.sources-chevron {
    width: 32px;
    height: 32px;
    margin-left: auto;
    margin-right: 0;
    color: #555;
}

.source-list {
    height: 477px;
    flex: none;
    width: 568px;
    overflow: hidden;
}

.source-card {
    height: 155px;
    display: flex;
    align-items: center;
    border: 2px solid #e2e2e2;
    border-radius: 8px;
    padding-right: 41px;
    overflow: hidden;
}

.source-strip {
    width: 31px;
    height: 100%;
    flex: none;
    padding-bottom: 8px;
    display: flex;
    align-items: center;
    justify-content: center;
    color: #fff;
    font-size: 22px;
}

.strip-a { background-color: #406ec0; }
.strip-b { background-color: #52ae7e; }
.strip-c { background-color: #de4c72; }

.source-text {
    flex: 1;
    padding-left: 24px;
}

.source-kind {
    font-size: 23px;
    line-height: 30px;
    font-weight: 400;
}

.source-kind span {
    color: #306cde;
}

.source-kind i {
    font-style: normal;
    margin: 0 3px;
    color: #888;
}

.source-name {
    margin-top: 13px;
    font-size: 27px;
    line-height: 34px;
    font-weight: 400;
    letter-spacing: 0.1px;
}

.source-count {
    margin-top: 1px;
    font-size: 18px;
    line-height: 24px;
    letter-spacing: 1.500px;
    color: #999;
}

.source-sep {
    height: 2px;
    margin: 14px 2px 14px 0;
    background-color: #e2e2e2;
}

.add-source {
    flex: none;
    margin-top: 34px;
    height: 64px;
    width: 576px;
    display: flex;
    align-items: center;
    justify-content: center;
    gap: 13px;
    border-radius: 6px;
    background-color: #306cde;
    color: #fff;
    font-size: 27px;
    font-weight: 500;
}

.add-source svg {
    width: 32px;
    height: 32px;
}

.side-scroll {
    position: absolute;
    left: 625px;
    top: 98px;
    width: 8px;
    height: 438px;
    border-radius: 4px;
    background-color: #e4e4e4;
}

/* Center column */
.center {
    flex: 1;
    min-width: 0;
    display: flex;
    flex-direction: column;
}

.toolbar {
    height: 97px;
    flex: none;
    display: flex;
    align-items: flex-start;
    padding-top: 16px;
    padding-left: 14px;
    padding-right: 12px;
    border-bottom: 2px solid #e8e8e8;
}

.tool-btn {
    width: 64px;
    height: 64px;
    border-radius: 6px;
    background-color: #e4ebf8;
    color: #306cde;
    display: flex;
    align-items: center;
    justify-content: center;
}

.tool-btn svg {
    width: 34px;
    height: 34px;
}

.tool-right {
    margin-left: auto;
}

.caret {
    margin-left: auto;
    margin-top: 29px;
    margin-right: 37px;
    width: 0;
    height: 0;
    border-left: 8px solid transparent;
    border-right: 8px solid transparent;
    border-top: 8px solid #555;
}

.tool-sep {
    width: 2px;
    height: 96px;
    margin-top: -16px;
    background-color: #e8e8e8;
}

.content {
    flex: 1;
    min-height: 0;
    display: flex;
    gap: 19px;
    padding: 18px 23px 13px 16px;
}

/* Map */
.map {
    width: 1613px;
    flex: none;
    position: relative;
    overflow: hidden;
    border-radius: 8px;
}

.map-art {
    display: block;
    width: 100%;
    height: 100%;
}

.land { fill: #fbfbf7; }
.water { fill: #d2d9db; }
.park { fill: #f2f5ef; }

.road-edge {
    stroke: #d8d8d6;
    stroke-width: 11;
    stroke-linejoin: round;
}

.road-core {
    stroke: #fbfbf7;
    stroke-width: 5;
    stroke-linejoin: round;
}

.hex {
    stroke: rgba(0, 0, 0, 0.5);
    stroke-width: 1;
    stroke-dasharray: 3 4;
}

.hex-base { fill: #dcebb0; }
.hex-dark { fill: #b4d69a; }
.hex-pale { fill: #f4f4d8; }

.pin {
    fill: none;
    stroke-width: 4;
}

.pin-yellow { stroke: #f2c23a; }
.pin-orange { stroke: #f49a2e; }
.pin-red { stroke: #e0552e; }

.map-label {
    position: absolute;
    left: 44px;
    top: 990px;
    font-size: 24px;
    font-weight: 600;
    letter-spacing: 0.5px;
    color: #8ea0b0;
}

.map-search {
    position: absolute;
    left: 23px;
    top: 30px;
    width: 500px;
    height: 62px;
    display: flex;
    align-items: center;
    gap: 20px;
    padding-left: 22px;
    background-color: #fff;
    border: 2px solid #ddd;
    border-radius: 8px;
    box-shadow: 0 2px 6px rgba(0, 0, 0, 0.25);
    font-size: 26px;
    color: #999;
}

.map-search svg {
    width: 32px;
    height: 32px;
    color: #555;
}

.map-btn {
    position: absolute;
    width: 64px;
    height: 64px;
    display: flex;
    align-items: center;
    justify-content: center;
    background-color: #fff;
    border-radius: 8px;
    box-shadow: 0 2px 6px rgba(0, 0, 0, 0.25);
}

.map-btn svg {
    width: 34px;
    height: 34px;
    color: #333;
}

.map-info {
    left: 1500px;
    top: 49px;
}

.map-info svg {
    color: #777;
}

.map-layers {
    left: 1516px;
    top: 1083px;
}

.map-zoom {
    position: absolute;
    left: 48px;
    top: 931px;
    width: 72px;
    background-color: #fff;
    border-radius: 8px;
    box-shadow: 0 2px 6px rgba(0, 0, 0, 0.25);
}

.zoom-cell {
    height: 72px;
    display: flex;
    align-items: center;
    justify-content: center;
    border-bottom: 2px solid #e2e2e2;
}

.zoom-cell:last-child {
    border-bottom: none;
}

.zoom-cell svg {
    width: 34px;
    height: 34px;
    color: #2c3032;
}

.zoom-level {
    font-size: 26px;
    font-weight: 500;
    color: #777;
}

.attribution {
    position: absolute;
    right: 14px;
    bottom: 15px;
    padding: 3px 14px;
    background-color: rgba(255, 255, 255, 0.25);
    font-size: 19px;
    line-height: 25px;
    color: #2c3032;
}

/* Widgets */
.widgets {
    flex: 1;
    display: flex;
    flex-direction: column;
    gap: 19px;
    min-width: 0;
}

.widget {
    flex: none;
    border: 2px solid #e2e2e2;
    border-radius: 8px;
    padding: 35px 33px 0 31px;
}

.widget:first-child {
    height: 660px;
}

.widget-head {
    display: flex;
    align-items: center;
    justify-content: space-between;
    padding-right: 9px;
}

.widget-head h3 {
    font-size: 32px;
    line-height: 40px;
    font-weight: 400;
    letter-spacing: 0.4px;
}

.widget-sub {
    margin-top: 20px;
    font-size: 23px;
    line-height: 30px;
}

.cat-list {
    margin-top: 26px;
    margin-right: 17px;
    display: flex;
    flex-direction: column;
    gap: 13.600px;
}

.cat-row {
    height: 36px;
    display: flex;
    align-items: center;
    justify-content: space-between;
    font-size: 26px;
}

.cat-row b {
    font-weight: 600;
}

.cat-track {
    margin-top: 7px;
    height: 8px;
    border-radius: 4px;
    background-color: #e4e4e4;
    overflow: hidden;
}

.cat-bar {
    height: 100%;
    border-radius: 4px;
    background-color: #72d8a0;
}

.cat-bar.others {
    background-color: #bbb;
}

.widget-search {
    margin-top: 37px;
    margin-left: 20px;
    height: 36px;
    display: flex;
    align-items: center;
    gap: 18px;
    font-size: 25px;
    font-weight: 500;
    color: #306cde;
}

.widget-search svg {
    width: 30px;
    height: 30px;
}

.widget-note {
    margin-top: 2px;
    font-size: 23px;
    line-height: 30px;
    color: #999;
}

.axis-top {
    margin-top: 24px;
    font-size: 21px;
    line-height: 26px;
    color: #aaa;
}

.histogram {
    margin-top: 9px;
    width: 496px;
    height: 324px;
    display: flex;
    align-items: flex-end;
    gap: 2px;
    background-color: transparent;
    background-image:
        linear-gradient(to right, #e4e4e4 1px, transparent 1px),
        linear-gradient(to bottom, #e4e4e4 1px, transparent 1px);
    background-size: 33px 100%, 100% 65px;
    border-right: 1px solid #e4e4e4;
}

.bin {
    flex: 1;
    background-color: #70cc98;
}

/* Publish dialog */
.backdrop {
    position: fixed;
    inset: 0;
    background-color: rgba(0, 0, 0, 0.5);
}

.modal {
    position: fixed;
    left: 869px;
    top: 60px;
    width: 1120px;
    height: 1296px;
    overflow: hidden;
    background-color: #fff;
    border-radius: 8px 8px 0 0;
    box-shadow: 0 0 50px rgba(0, 0, 0, 0.25);
}

.modal-head {
    height: 144px;
    display: flex;
    align-items: center;
    justify-content: space-between;
    padding: 0 41px 0 48px;
}

.modal-head h1 {
    font-size: 32px;
    font-weight: 400;
    letter-spacing: 0.3px;
}

.modal-head svg {
    width: 38px;
    height: 38px;
    color: #777;
}

.acc-head {
    margin: 0 33px 0 32px;
    display: flex;
    align-items: center;
    gap: 33px;
    padding: 0 22px 0 32px;
    font-size: 32.700px;
    font-weight: 400;
    letter-spacing: 0.1px;
}

.acc-head > svg:first-child {
    width: 36px;
    height: 36px;
}

.acc-open {
    height: 130px;
    border-bottom: 2px solid #e6e8e8;
}

.acc-closed {
    height: 172px;
    border-top: 2px solid #e6e8e8;
}

.acc-chevron {
    width: 32px;
    height: 32px;
    margin-left: auto;
    margin-right: -4px;
}

.flip {
    transform: rotate(180deg);
}

.acc-body {
    position: relative;
    height: 864px;
    margin: 0 33px 0 32px;
}

.acc-panel {
    width: 982px;
    height: 100%;
    margin-left: 32px;
    padding: 20px 49px 0;
    background-color: #f6f8f7;
    border-radius: 0 0 8px 8px;
}

.acc-scroll {
    position: absolute;
    right: 0;
    top: 288px;
    bottom: 0;
    width: 10px;
    border-radius: 5px;
    background-color: #e6e8e8;
}

.option-card {
    height: 163px;
    display: flex;
    align-items: center;
    padding: 0 38px 0 31px;
    background-color: #fff;
    border: 2px solid #e6e8e8;
    border-radius: 8px;
}

.option-icon {
    width: 96px;
    height: 96px;
    flex: none;
    border-radius: 50%;
    background-color: #ebf8f1;
    display: flex;
    align-items: center;
    justify-content: center;
    color: #76d7a2;
}

.option-icon svg {
    width: 48px;
    height: 48px;
}

.option-text {
    flex: 1;
    padding-left: 24px;
    padding-top: 3px;
}

.option-title {
    font-size: 29.500px;
    line-height: 38px;
    letter-spacing: 0.5px;
}

.option-sub {
    margin-top: 1px;
    font-size: 26px;
    line-height: 38px;
    color: #85888a;
    letter-spacing: 0.42px;
}

.radio {
    width: 34px;
    height: 34px;
    border-radius: 50%;
    border: 3px solid #2c68d8;
    background-image: radial-gradient(circle, #2c68d8 0 8.500px, transparent 9.500px);
}

.share-card {
    height: 632px;
    background-color: #fff;
    border: 2px solid #e6e8e8;
    border-top: none;
    border-radius: 0 0 8px 8px;
}

.share-tabs {
    height: 98px;
    display: flex;
    justify-content: center;
    border-bottom: 2px solid #e6e8e8;
}

.share-tab {
    width: 198px;
    height: 98px;
    padding: 30px 0 0 27px;
    font-size: 26.500px;
    font-weight: 500;
    line-height: 38px;
}

.share-tab.active {
    color: #2c68d8;
    border-bottom: 8px solid #2c68d8;
}

.share-body {
    padding: 0 47px;
}

.protect {
    height: 32px;
    margin-top: 65px;
    margin-left: 48px;
    display: flex;
    align-items: center;
    gap: 16px;
    font-size: 23.200px;
    font-weight: 400;
}

.switch {
    width: 48px;
    height: 32px;
    border: 2px solid #888;
    border-radius: 16px;
    background-image: radial-gradient(circle at 15px 14px, #888 0 8px, transparent 9px);
}

.share-line {
    height: 2px;
    margin-top: 48px;
    background-color: #e6e8e8;
}

.share-row {
    margin-top: 33px;
    display: flex;
    align-items: center;
    justify-content: space-between;
}

.copy-btn {
    width: 390px;
    height: 67px;
    display: flex;
    align-items: center;
    gap: 12px;
    padding-left: 24px;
    border: 4px solid #2c68d8;
    border-radius: 6px;
    color: #2c68d8;
    font-size: 26.500px;
    font-weight: 500;
}

.copy-btn svg {
    width: 34px;
    height: 34px;
}

.social {
    display: flex;
    gap: 23px;
    padding-right: 9px;
    color: #808284;
}

.social svg {
    width: 48px;
    height: 48px;
}

.embed-label {
    margin-top: 44px;
    font-size: 23px;
    line-height: 30px;
    font-weight: 400;
}

.embed-field {
    margin-top: 3px;
    height: 64px;
    display: flex;
    align-items: center;
    justify-content: space-between;
    padding: 0 19px 0 24px;
    border: 2px solid #c4c4c4;
    border-radius: 6px;
    font-size: 26.800px;
}

.embed-field svg {
    width: 40px;
    height: 40px;
    color: #888;
}

.embed-help {
    margin-top: 18px;
    font-size: 22px;
    line-height: 32px;
    letter-spacing: 0.4px;
    color: #9a9c9e;
}
```

FILE: map.js
```js
// Draws the H3 cells of the map. Coordinates are page pixels, same as the viewBox.
const HEX_W = 24;
const ROW_H = 20.8;
const SIDE = 13.86;

const regions = [
    // big area south of the bay, runs behind the dialog
    [[1985,415],[2005,440],[2000,470],[2020,470],[2040,445],[2110,440],[2128,465],[2155,510],[2178,545],[2203,570],[2214,603],[2205,648],[2233,670],[2253,702],[2256,735],[2268,768],[2268,1410],[1160,1410],[1160,1395],[1235,1350],[1985,1350]],
    // north east corner
    [[2218,262],[2235,258],[2268,282],[2268,522],[2250,515],[2212,490],[2208,453],[2208,412],[2218,390],[2182,385],[2147,360],[2146,350],[2180,335],[2210,290]]
];

const dark = [[2129,570],[2142,590],[2165,588],[2154,608],[2047,592],[2070,591],[2094,590],[2011,613],[2023,632],[2000,632],[2072,630],[2118,629],[2012,652],[2036,651],[2060,650],[2084,649],[2048,669],[2170,787],[2185,790],[2231,798],[2245,874],[2243,895],[1322,1370],[1367,1370],[1286,1390],[1313,1390],[1340,1390],[1376,1390],[1571,1367],[1571,1383],[1585,1397]];

const pale = [[2031,457],[2102,455],[1996,439],[2188,548],[2200,567],[2202,645],[2227,683],[2222,490],[2233,470],[2246,450],[2257,470],[2245,490],[2258,508],[2257,430],[2257,450],[2137,879],[2007,902],[2030,902],[2019,923],[2102,900],[2105,977],[2153,977],[2175,975],[2140,996],[2092,996],[2083,1017],[2046,1037],[2071,1037],[2095,1037],[2035,1058],[2024,1076],[2089,1286],[2112,1286],[2055,1307],[2077,1307],[2102,1307],[2125,1307],[2067,1328],[2091,1328],[2113,1328],[2137,1328],[2080,1349],[2102,1349],[2127,1349],[2150,1349],[1260,1375],[1240,1385],[1700,1360]];

const holes = [[2215,925],[2237,925],[2200,945],[2222,945],[2244,945],[2211,965],[2233,965],[2222,985],[2116,986],[2128,965],[2105,1006],[1440,1360],[1180,1380],[2220,1392],[2245,1392]];

function inside(x, y, poly) {
    let hit = false;
    for (let i = 0, j = poly.length - 1; i < poly.length; j = i++) {
        const [xi, yi] = poly[i];
        const [xj, yj] = poly[j];
        if ((yi > y) !== (yj > y) && x < (xj - xi) * (y - yi) / (yj - yi) + xi) {
            hit = !hit;
        }
    }
    return hit;
}

function near(x, y, list) {
    return list.some(([px, py]) => Math.abs(px - x) < 13 && Math.abs(py - y) < 11);
}

function hexPoints(x, y) {
    const w = HEX_W / 2;
    return [[x, y - SIDE], [x + w, y - SIDE / 2], [x + w, y + SIDE / 2], [x, y + SIDE], [x - w, y + SIDE / 2], [x - w, y - SIDE / 2]]
        .map(p => p.join(",")).join(" ");
}

const group = document.getElementById("hexes");
const NS = "http://www.w3.org/2000/svg";

for (let row = -6; row < 52; row++) {
    const y = 356 + row * ROW_H;
    const shift = row % 2 === 0 ? 0 : HEX_W / 2;
    for (let col = -43; col < 6; col++) {
        const x = 2158 + col * HEX_W + shift;
        if (x < 1970 && y < 1340) continue; // behind the dialog anyway
        if (!regions.some(r => inside(x, y, r)) || near(x, y, holes)) continue;

        let kind = "hex-base";
        if (near(x, y, dark)) kind = "hex-dark";
        else if (near(x, y, pale)) kind = "hex-pale";

        const cell = document.createElementNS(NS, "polygon");
        cell.setAttribute("points", hexPoints(x, y));
        cell.setAttribute("class", "hex " + kind);
        group.appendChild(cell);
    }
}
```
